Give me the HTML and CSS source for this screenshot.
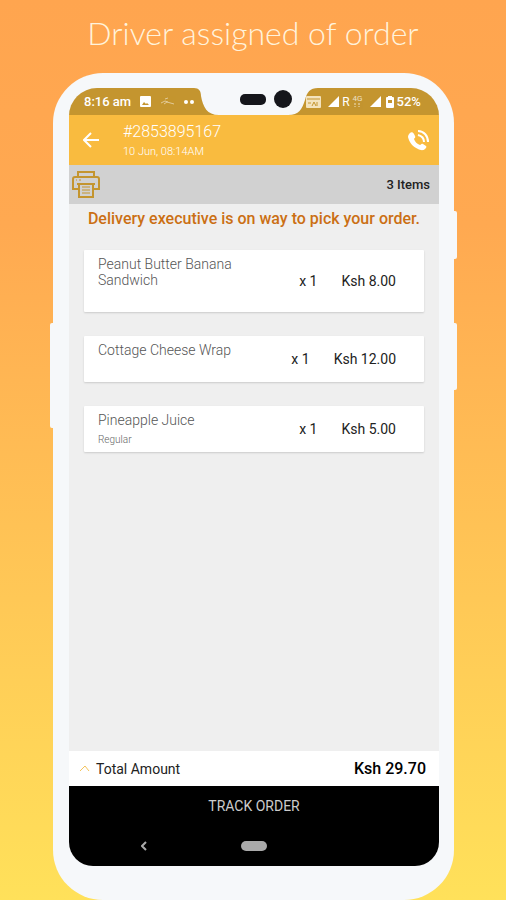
FILE: index.html
```html
<!DOCTYPE html>
<html lang="en">
<head>
    <meta charset="UTF-8">
    <meta name="viewport" content="width=device-width, initial-scale=1">
    <title>Driver assigned of order</title>
    <link rel="stylesheet" href="styles.css">
</head>
<body>
<h1 class="title">Driver assigned of order</h1>
<div class="phone">
    <span class="key key-left"></span>
    <span class="key key-power"></span>
    <span class="key key-right"></span>
    <div class="screen">
        <div class="status">
            <div class="status-left">
                <span class="time">8:16 am</span>
                <svg width="11" height="11" viewBox="0 0 11 11">
                    <rect width="11" height="11" rx="1" fill="#fff"/>
                    <path d="M2 9l2-3 2 2 1-1 2 2z" fill="#c4952f"/>
                </svg>
                <svg class="faint" width="15" height="10" viewBox="0 0 15 10">
                    <path d="M1 6l4-2 3 1M5 2l3-1M4 7l3-2 7 2" fill="none" stroke="#fff"/>
                </svg>
                <svg width="10" height="4" viewBox="0 0 10 4" fill="#fff">
                    <circle cx="2" cy="2" r="2"/>
                    <circle cx="8" cy="2" r="2"/>
                </svg>
            </div>
            <svg class="notch" width="124" height="27" viewBox="0 0 124 27">
                <path d="M0 0C5 0 7 3 7 8C9 19 13 27 25 27H94C105 27 108 21 111 12C113 4 116 0 124 0Z" fill="#f6f8fa"/>
                <rect x="46" y="6" width="26" height="11" rx="5" fill="#15161b"/>
                <circle cx="89" cy="11" r="9" fill="#15161b"/>
            </svg>
            <div class="status-right">
                <svg width="15" height="12" viewBox="0 0 15 12">
                    <rect width="15" height="12" rx="1" fill="#f3e3bd"/>
                    <path d="M1 3h13M2 7h3M6 10l2-4 2 4M11 6v4" fill="none" stroke="#c4952f"/>
                </svg>
                <svg class="signal" width="11" height="11" viewBox="0 0 11 11"><path d="M11 0v11H0z" fill="#fff"/></svg>
                <span class="roaming">R</span>
                <span class="net">4G<svg width="8" height="5" viewBox="0 0 8 5"><path d="M2 0v4M6 0v4" stroke="#fff" stroke-dasharray="2 1"/></svg></span>
                <svg class="signal" width="11" height="11" viewBox="0 0 11 11"><path d="M11 0v11H0z" fill="#fff"/></svg>
                <svg class="battery" width="8" height="12" viewBox="0 0 8 12">
                    <path d="M2 0h4v1h1q1 0 1 1v9q0 1-1 1H1q-1 0-1-1V2q0-1 1-1h1z" fill="#fff"/>
                    <rect x="2" y="4" width="4" height="3" fill="#c4952f"/>
                </svg>
                <span class="percent">52%</span>
            </div>
        </div>
        <header class="header">
            <button class="icon-btn" type="button" aria-label="Back">
                <svg width="16" height="16" viewBox="0 0 16 16"><path d="M16 8H1M8 1L1 8l7 7" fill="none" stroke="#fff" stroke-width="2"/></svg>
            </button>
            <div class="order">
                <p class="order-id">#2853895167</p>
                <p class="order-date">10 Jun, 08:14AM</p>
            </div>
            <button class="icon-btn" type="button" aria-label="Call">
                <svg width="21" height="21" viewBox="0 0 21 21">
                    <path d="M2 3C3 2 5 2 6 4L7 6C8 8 6 8 6 9C7 12 9 14 12 15C13 15 13 13 15 14L18 16C19 17 18 18 17 19C15 21 12 20 10 19C5 17 1 12 0 7C0 5 1 4 2 3Z" fill="#fff"/>
                    <path d="M10 5C14 6 16 8 16 12M10 1C16 1 20 6 20 12" fill="none" stroke="#fff" stroke-width="2"/>
                </svg>
            </button>
        </header>
        <div class="toolbar">
            <button class="icon-btn" type="button" aria-label="Print">
                <svg width="28" height="27" viewBox="0 0 28 27" fill="none" stroke="#c4952f" stroke-width="2">
                    <path d="M6 6V1h16v5M6 18H1V8q0-2 2-2h22q2 0 2 2v10h-5"/>
                    <path d="M5 13h18M7 13v13h14V13"/>
                    <path d="M10 16h8M10 19h8M10 22h8" stroke-width="1"/>
                    <path d="M4 9h1M7 9h2" stroke-width="1"/>
                </svg>
            </button>
            <span class="count">3 Items</span>
        </div>
        <main class="content">
            <p class="message">Delivery executive is on way to pick your order.</p>
            <ul class="items">
                <li class="item">
                    <div class="item-info">
                        <p class="item-name">Peanut Butter Banana Sandwich</p>
                        <p class="item-option"></p>
                    </div>
                    <span class="qty">x 1</span>
                    <span class="price">Ksh 8.00</span>
                </li>
                <li class="item">
                    <div class="item-info">
                        <p class="item-name">Cottage Cheese Wrap</p>
                        <p class="item-option"></p>
                    </div>
                    <span class="qty">x 1</span>
                    <span class="price">Ksh 12.00</span>
                </li>
                <li class="item">
                    <div class="item-info">
                        <p class="item-name">Pineapple Juice</p>
                        <p class="item-option">Regular</p>
                    </div>
                    <span class="qty">x 1</span>
                    <span class="price">Ksh 5.00</span>
                </li>
            </ul>
        </main>
        <div class="total">
            <svg width="11" height="7" viewBox="0 0 11 7"><path d="M1 6l5-5 4 5" fill="none" stroke="#f3c35a"/></svg>
            <span class="total-label">Total Amount</span>
            <span class="total-price">Ksh 29.70</span>
        </div>
        <button class="track" type="button">TRACK ORDER</button>
        <nav class="navbar">
            <button class="icon-btn" type="button" aria-label="System back">
                <svg width="6" height="10" viewBox="0 0 6 10"><path d="M5 1L1 5l4 4" fill="none" stroke="#aaa" stroke-width="2"/></svg>
            </button>
            <button class="home" type="button" aria-label="Home"></button>
        </nav>
    </div>
</div>
</body>
</html>
```
FILE: styles.css
```css
*{
    margin: 0;
    padding: 0;
    box-sizing: border-box;
}
body{
    min-height: 100vh;
    display: flex;
    flex-direction: column;
    font-family: Roboto, "Liberation Sans", sans-serif;
    background: linear-gradient(#ffa54f, #ffa951 25%, #ffe15a);
}
ul{
    list-style: none;
}
button{
    border: 0;
    background: none;
    font-family: inherit;
    cursor: pointer;
}
svg{
    display: block;
    flex: none;
}
.title{
    padding: 15px 0 22px;
    font-family: Lato, sans-serif;
    font-size: 32px;
    line-height: 36px;
    font-weight: 300;
    text-align: center;
    color: #fff3dc;
}
/*phone body*/
.phone{
    flex: 1;
    display: flex;
    margin: 0 52px 0 53px;
    padding: 15px 15px 34px 16px;
    border-radius: 50px;
    background: #f6f8fa;
    position: relative;
}
.key{
    position: absolute;
    width: 5px;
    background: #f6f8fa;
    border-radius: 2px;
}
.key-left{
    left: -3px;
    top: 250px;
    height: 105px;
}
.key-power{
    right: -3px;
    top: 138px;
    height: 48px;
}
.key-right{
    right: -3px;
    top: 250px;
    height: 67px;
}
.screen{
    flex: 1;
    display: flex;
    flex-direction: column;
    border-radius: 28px 28px 24px 24px;
    overflow: hidden;
    background: #efefef;
}
/*status bar*/
.status{
    height: 27px;
    display: flex;
    justify-content: space-between;
    background: #c4952f;
    color: #fff;
}
.status-left,
.status-right{
    display: flex;
    align-items: center;
}
.status-left{
    gap: 9px;
    padding-left: 15px;
}
.status-right{
    flex: 1;
    gap: 3px;
    margin-left: -12px;
}
.faint{
    opacity: 0.5;
}
.time,
.percent{
    font-size: 13px;
    font-weight: 500;
}
.signal{
    margin-left: 4px;
}
.roaming{
    font-size: 12px;
}
.net{
    font-size: 8px;
    line-height: 8px;
    opacity: 0.7;
}
.battery{
    margin-left: 2px;
}
/*order header*/
.header{
    height: 50px;
    display: flex;
    align-items: center;
    padding: 4px 10px 4px 14px;
    background: #f9bb3f;
}
.order{
    flex: 1;
    margin-left: 24px;
    padding-top: 4px;
    color: #fff;
    font-weight: 300;
}
.order-id{
    font-size: 16px;
    line-height: 20px;
}
.order-date{
    font-size: 11px;
    line-height: 20px;
}
.toolbar{
    height: 39px;
    display: flex;
    align-items: center;
    justify-content: space-between;
    padding: 0 9px 0 3px;
    background: #d1d1d1;
}
.count{
    font-size: 13px;
    font-weight: 500;
    color: #222;
}
/*item list*/
.content{
    flex: 1;
    padding: 5px 15px;
}
.message{
    margin-bottom: 21px;
    font-size: 16px;
    line-height: 20px;
    font-weight: 500;
    text-align: center;
    white-space: nowrap;
    color: #cb6f14;
}
.items{
    display: flex;
    flex-direction: column;
    gap: 24px;
}
.item{
    display: flex;
    align-items: center;
    padding: 6px 28px 6px 14px;
    background: #fff;
    border-radius: 1px;
    box-shadow: 0 1px 2px rgba(0,0,0,0.15);
}
.item-info{
    flex: 1;
}
.item-name{
    max-width: 150px;
    font-size: 14px;
    line-height: 16px;
    font-weight: 300;
    color: #555;
}
.item-option{
    min-height: 18px;
    padding-top: 6px;
    font-size: 10px;
    line-height: 12px;
    font-weight: 300;
    color: #666;
}
.qty,
.price{
    font-size: 14px;
    color: #222;
}
.price{
    margin-left: 24px;
}
/*total and bottom bars*/
.total{
    height: 35px;
    display: flex;
    align-items: center;
    padding: 0 13px 0 10px;
    background: #fff;
    color: #222;
}
.total-label{
    flex: 1;
    margin-left: 6px;
    font-size: 14px;
}
.total-price{
    font-size: 16px;
    font-weight: 500;
    color: #000;
}
.track{
    height: 40px;
    background: #000;
    color: #ccc;
    font-size: 14px;
}
.navbar{
    height: 40px;
    display: grid;
    grid-template-columns: 2fr 26px 2fr;
    align-items: center;
    justify-items: center;
    background: #000;
}
.navbar .icon-btn{
    padding-right: 22px;
}
.home{
    width: 26px;
    height: 10px;
    border-radius: 5px;
    background: #aaa;
}
```
